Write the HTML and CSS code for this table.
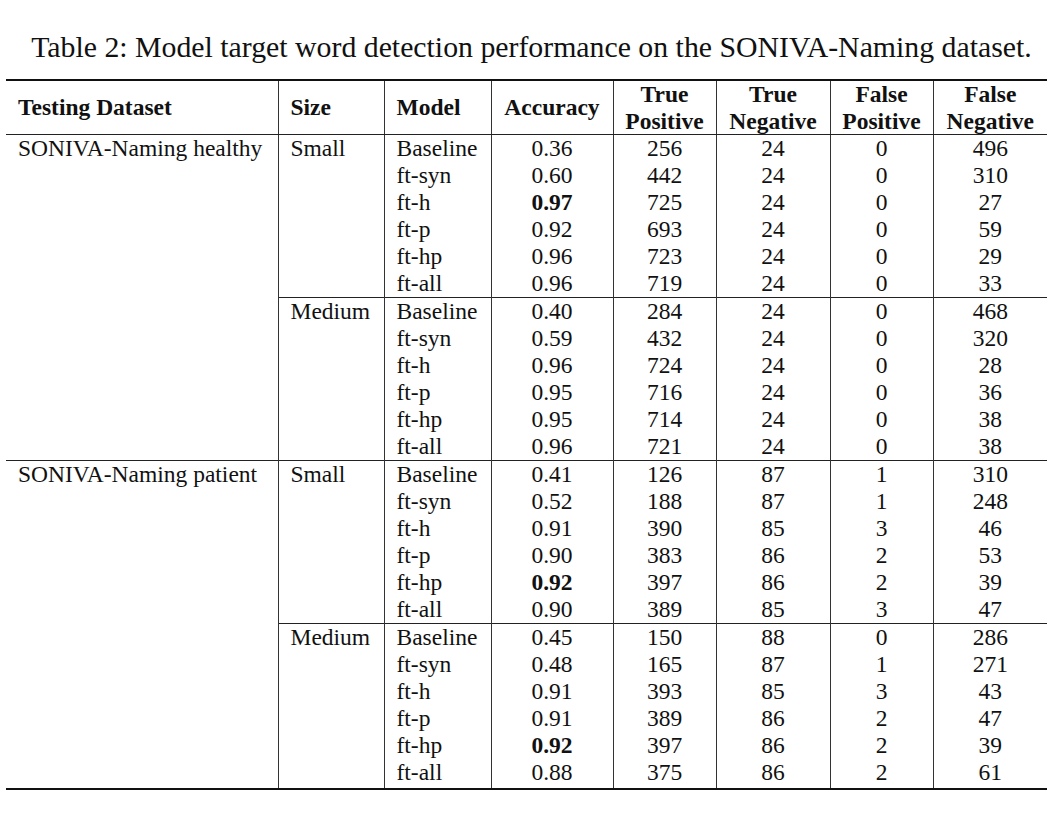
FILE: index.html
```html
<!DOCTYPE html>
<html>
<head>
<meta charset="utf-8">
<link rel="stylesheet" href="styles.css">
</head>
<body>
<div class="page">
  <div class="caption">Table 2: Model target word detection performance on the SONIVA-Naming dataset.</div>
  <table class="results">
    <colgroup>
      <col class="c-ds"><col class="c-size"><col class="c-model"><col class="c-acc">
      <col class="c-tp"><col class="c-tn"><col class="c-fp"><col class="c-fn">
    </colgroup>
    <thead>
      <tr>
        <th class="l">Testing Dataset</th>
        <th class="l">Size</th>
        <th class="l">Model</th>
        <th>Accuracy</th>
        <th>True<br>Positive</th>
        <th>True<br>Negative</th>
        <th>False<br>Positive</th>
        <th>False<br>Negative</th>
      </tr>
    </thead>
    <tbody class="group">
      <tr><td class="l ds" rowspan="12">SONIVA-Naming healthy</td><td class="l" rowspan="6">Small</td><td class="l">Baseline</td><td>0.36</td><td>256</td><td>24</td><td>0</td><td>496</td></tr>
      <tr><td class="l">ft-syn</td><td>0.60</td><td>442</td><td>24</td><td>0</td><td>310</td></tr>
      <tr><td class="l">ft-h</td><td><b>0.97</b></td><td>725</td><td>24</td><td>0</td><td>27</td></tr>
      <tr><td class="l">ft-p</td><td>0.92</td><td>693</td><td>24</td><td>0</td><td>59</td></tr>
      <tr><td class="l">ft-hp</td><td>0.96</td><td>723</td><td>24</td><td>0</td><td>29</td></tr>
      <tr><td class="l">ft-all</td><td>0.96</td><td>719</td><td>24</td><td>0</td><td>33</td></tr>
      <tr class="sub"><td class="l" rowspan="6">Medium</td><td class="l">Baseline</td><td>0.40</td><td>284</td><td>24</td><td>0</td><td>468</td></tr>
      <tr><td class="l">ft-syn</td><td>0.59</td><td>432</td><td>24</td><td>0</td><td>320</td></tr>
      <tr><td class="l">ft-h</td><td>0.96</td><td>724</td><td>24</td><td>0</td><td>28</td></tr>
      <tr><td class="l">ft-p</td><td>0.95</td><td>716</td><td>24</td><td>0</td><td>36</td></tr>
      <tr><td class="l">ft-hp</td><td>0.95</td><td>714</td><td>24</td><td>0</td><td>38</td></tr>
      <tr><td class="l">ft-all</td><td>0.96</td><td>721</td><td>24</td><td>0</td><td>38</td></tr>
    </tbody>
    <tbody class="group">
      <tr><td class="l ds" rowspan="12">SONIVA-Naming patient</td><td class="l" rowspan="6">Small</td><td class="l">Baseline</td><td>0.41</td><td>126</td><td>87</td><td>1</td><td>310</td></tr>
      <tr><td class="l">ft-syn</td><td>0.52</td><td>188</td><td>87</td><td>1</td><td>248</td></tr>
      <tr><td class="l">ft-h</td><td>0.91</td><td>390</td><td>85</td><td>3</td><td>46</td></tr>
      <tr><td class="l">ft-p</td><td>0.90</td><td>383</td><td>86</td><td>2</td><td>53</td></tr>
      <tr><td class="l">ft-hp</td><td><b>0.92</b></td><td>397</td><td>86</td><td>2</td><td>39</td></tr>
      <tr><td class="l">ft-all</td><td>0.90</td><td>389</td><td>85</td><td>3</td><td>47</td></tr>
      <tr class="sub"><td class="l" rowspan="6">Medium</td><td class="l">Baseline</td><td>0.45</td><td>150</td><td>88</td><td>0</td><td>286</td></tr>
      <tr><td class="l">ft-syn</td><td>0.48</td><td>165</td><td>87</td><td>1</td><td>271</td></tr>
      <tr><td class="l">ft-h</td><td>0.91</td><td>393</td><td>85</td><td>3</td><td>43</td></tr>
      <tr><td class="l">ft-p</td><td>0.91</td><td>389</td><td>86</td><td>2</td><td>47</td></tr>
      <tr><td class="l">ft-hp</td><td><b>0.92</b></td><td>397</td><td>86</td><td>2</td><td>39</td></tr>
      <tr><td class="l">ft-all</td><td>0.88</td><td>375</td><td>86</td><td>2</td><td>61</td></tr>
    </tbody>
  </table>
</div>
</body>
</html>
```

FILE: styles.css
```css
html, body {
  margin: 0;
  padding: 0;
  background: #fff;
}

body {
  font-family: "Liberation Serif", "Times New Roman", serif;
  color: #111;
}

.page {
  padding: 0 5px 0 6px;
}

.caption {
  font-size: 29.8px;
  line-height: 34px;
  text-align: center;
  white-space: nowrap;
  padding-top: 30px;
  padding-bottom: 15px;
  padding-left: 10px;
  color: #111;
}

.results {
  border-collapse: collapse;
  table-layout: fixed;
  width: 1041px;
  font-size: 23.5px;
  line-height: 27px;
  border-top: 2.5px solid #111;
  border-bottom: 2.5px solid #111;
}

.c-ds { width: 272px; }
.c-size { width: 106px; }
.c-model { width: 107px; }
.c-acc { width: 122px; }
.c-tp { width: 103px; }
.c-tn { width: 114px; }
.c-fp { width: 103px; }
.c-fn { width: 114px; }

.results th,
.results td {
  padding: 0 4px;
  text-align: center;
  vertical-align: top;
  border-left: 1px solid #333;
  white-space: nowrap;
}

.results th:first-child,
.results td.ds {
  border-left: none;
}

.results th {
  font-weight: bold;
  border-bottom: 1px solid #222;
  vertical-align: middle;
  line-height: 26.5px;
}

.results .l {
  text-align: left;
  padding-left: 12px;
}

.results tbody.group + tbody.group tr:first-child td {
  border-top: 1px solid #222;
}

.results tr.sub td {
  border-top: 1px solid #222;
}

.results tbody.group:last-child tr:last-child td {
  padding-bottom: 2px;
}

.results b {
  font-weight: bold;
}
```
